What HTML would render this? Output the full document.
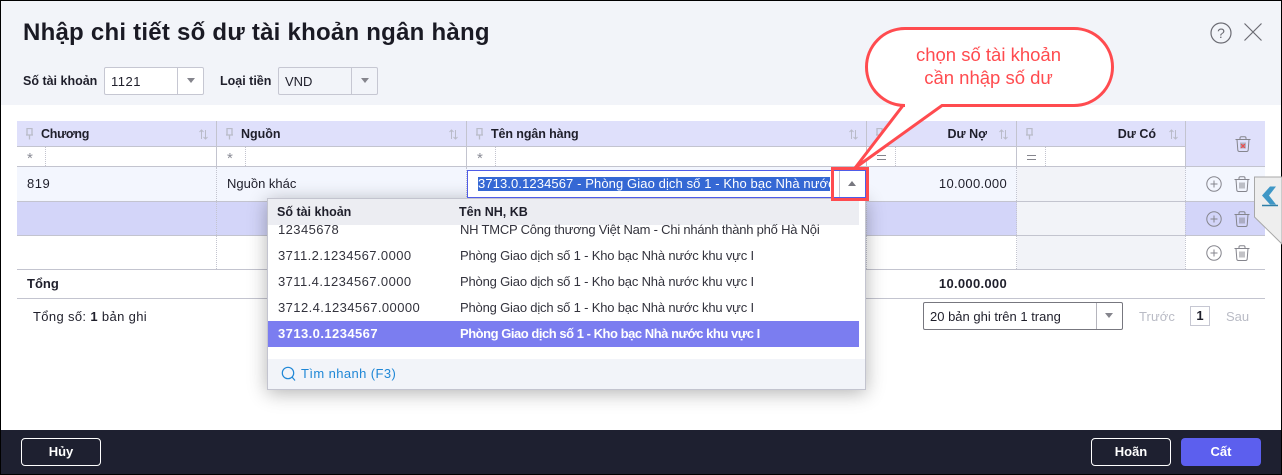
<!DOCTYPE html>
<html lang="vi"><head><meta charset="utf-8"><title>Nhập chi tiết số dư</title>
<style>
html,body{margin:0;padding:0;background:#000}
body{width:1282px;height:475px;overflow:hidden;position:relative;font-family:"Liberation Sans","DejaVu Sans",sans-serif;font-size:13px;color:#1f1f2b}
div,span,svg{position:absolute;box-sizing:border-box}
.t{white-space:nowrap;line-height:16px}
.b{font-weight:bold}
.r{text-align:right}
.hl{background:#c3c4cf}
.vd{width:0;border-left:1px dotted #c3c4cf}
.ic{fill:none}
.grey{color:#8a8c96;font-size:15px}
.n{color:#33333d;letter-spacing:.42px}
.p{color:#33333d;letter-spacing:-.18px}
</style></head><body>
<svg width="0" height="0" style="left:0;top:0">
<defs>
<symbol id="pin" viewBox="0 0 9 12"><path d="M2 .5h5v6.500H2zM1 7h7M4.500 7v4.500" fill="none" stroke="#b9bbc8" stroke-width="1.300"/></symbol>
<symbol id="sort" viewBox="0 0 9 11"><path d="M2.500 10V1M.5 3l2-2 2 2M6.500 1v9M4.500 8l2 2 2-2" fill="none" stroke="#b9bbc8" stroke-width="1"/></symbol>
<symbol id="plus" viewBox="0 0 16 16"><circle cx="8" cy="8" r="7.200" fill="none" stroke="#85858d" stroke-width="1"/><path d="M8 4.500v7M4.500 8h7" stroke="#85858d" stroke-width="1"/></symbol>
<symbol id="trash" viewBox="0 0 16 16"><path d="M.5 3.500h15M5 3.500V2q0-1.300 1.300-1.300h3.400Q11 .7 11 2v1.500M2 3.500l.8 10.500q.1 1.500 1.600 1.500h7.200q1.500 0 1.600-1.500L14 3.500M6 6.500v6M8 6.500v6M10 6.500v6" fill="none" stroke="#85858d" stroke-width="1"/></symbol>
</defs></svg>

<div style="left:1px;top:1px;width:1280px;height:473px;background:#fff"></div>
<div style="left:1px;top:1px;width:1280px;height:104px;background:#f2f4f9"></div>
<div class="t b" style="left:23px;top:19px;font-size:24px;line-height:28px;color:#1a1a24;letter-spacing:.24px">Nhập chi tiết số dư tài khoản ngân hàng</div>

<svg style="left:1210px;top:22px" width="56" height="22" class="ic"><circle cx="11" cy="11" r="10" stroke="#6c6c74" stroke-width="1.200" fill="none"/><text x="11" y="16" text-anchor="middle" font-size="14" fill="#6c6c74" font-family="Liberation Sans">?</text><path d="M34.500 1.500l17 17M51.500 1.500l-17 17" stroke="#6c6c74" stroke-width="1.200"/></svg>

<div class="t b" style="left:23px;top:73px;font-size:12.500px">Số tài khoản</div>
<div style="left:104px;top:67px;width:100px;height:28px;background:#fff;border:1px solid #c6c7d2;border-radius:2px"></div>
<div class="t" style="left:111px;top:74px;letter-spacing:.5px">1121</div>
<div style="left:177px;top:68px;width:1px;height:26px;background:#c6c7d2"></div>
<svg style="left:186px;top:78px" width="10" height="6"><path d="M1 0h8l-4 5z" fill="#85858d"/></svg>
<div class="t b" style="left:220px;top:73px;font-size:12.500px">Loại tiền</div>
<div style="left:278px;top:67px;width:100px;height:28px;background:#f2f4f9;border:1px solid #c6c7d2;border-radius:2px"></div>
<div class="t" style="left:285px;top:74px">VND</div>
<div style="left:351px;top:68px;width:1px;height:26px;background:#c6c7d2"></div>
<svg style="left:360px;top:78px" width="10" height="6"><path d="M1 0h8l-4 5z" fill="#85858d"/></svg>

<!-- table backgrounds -->
<div style="left:17px;top:121px;width:1248px;height:25px;background:#dfe0fb"></div>
<div style="left:1185px;top:121px;width:80px;height:46px;background:#dfe0fb"></div>
<div style="left:17px;top:167px;width:1248px;height:34px;background:#f3f6fe"></div>
<div style="left:17px;top:202px;width:1248px;height:33px;background:#d3d5f9"></div>
<div style="left:1017px;top:167px;width:168px;height:102px;background:#f2f3f8"></div>
<!-- horizontal lines -->
<div class="hl" style="left:17px;top:146px;width:1168px;height:1px"></div>
<div class="hl" style="left:17px;top:166px;width:1248px;height:1px"></div>
<div class="hl" style="left:17px;top:201px;width:1248px;height:1px"></div>
<div class="hl" style="left:17px;top:235px;width:1248px;height:1px"></div>
<div class="hl" style="left:17px;top:269px;width:1248px;height:1px"></div>
<div class="hl" style="left:17px;top:298px;width:1248px;height:1px"></div>
<!-- vertical lines -->
<div class="hl" style="left:216px;top:121px;width:1px;height:45px"></div>
<div class="hl" style="left:466px;top:121px;width:1px;height:45px"></div>
<div class="hl" style="left:866px;top:121px;width:1px;height:45px"></div>
<div class="hl" style="left:1016px;top:121px;width:1px;height:45px"></div>
<div class="hl" style="left:1185px;top:121px;width:1px;height:46px"></div>
<div class="vd" style="left:216px;top:167px;height:102px"></div>
<div class="vd" style="left:466px;top:167px;height:102px"></div>
<div class="vd" style="left:866px;top:167px;height:102px"></div>
<div class="vd" style="left:1016px;top:167px;height:102px"></div>
<div class="vd" style="left:1185px;top:167px;height:102px"></div>
<div class="vd" style="left:45px;top:147px;height:19px"></div>
<div class="vd" style="left:245px;top:147px;height:19px"></div>
<div class="vd" style="left:495px;top:147px;height:19px"></div>
<div class="vd" style="left:895px;top:147px;height:19px"></div>
<div class="vd" style="left:1045px;top:147px;height:19px"></div>

<!-- header cells -->
<svg style="left:25px;top:128px" width="9" height="12"><use href="#pin"/></svg>
<svg style="left:225px;top:128px" width="9" height="12"><use href="#pin"/></svg>
<svg style="left:475px;top:128px" width="9" height="12"><use href="#pin"/></svg>
<svg style="left:875px;top:128px" width="9" height="12"><use href="#pin"/></svg>
<svg style="left:1025px;top:128px" width="9" height="12"><use href="#pin"/></svg>
<svg style="left:199px;top:129px" width="9" height="11"><use href="#sort"/></svg>
<svg style="left:449px;top:129px" width="9" height="11"><use href="#sort"/></svg>
<svg style="left:849px;top:129px" width="9" height="11"><use href="#sort"/></svg>
<svg style="left:999px;top:129px" width="9" height="11"><use href="#sort"/></svg>
<svg style="left:1169px;top:129px" width="9" height="11"><use href="#sort"/></svg>
<div class="t b" style="left:41px;top:126px;font-size:12.500px;letter-spacing:-.3px">Chương</div>
<div class="t b" style="left:241px;top:126px;font-size:12.500px">Nguồn</div>
<div class="t b" style="left:491px;top:126px;font-size:12.500px;letter-spacing:-.1px">Tên ngân hàng</div>
<div class="t b r" style="left:927px;width:60px;top:126px;font-size:12.500px">Dư Nợ</div>
<div class="t b r" style="left:1096px;width:60px;top:126px;font-size:12.500px">Dư Có</div>
<div class="t grey" style="left:27px;top:151px">*</div>
<div class="t grey" style="left:227px;top:151px">*</div>
<div class="t grey" style="left:477px;top:151px">*</div>
<div style="left:877px;top:155px;width:9px;height:5px;border-top:1px solid #85858d;border-bottom:1px solid #85858d"></div>
<div style="left:1027px;top:155px;width:9px;height:5px;border-top:1px solid #85858d;border-bottom:1px solid #85858d"></div>

<svg style="left:1235px;top:136px" width="16" height="17"><use href="#trash" width="16" height="16"/><path d="M6 8l4 4M10 8l-4 4" stroke="#f04a4a" stroke-width="1.200"/></svg>

<!-- row data -->
<div class="t" style="left:27px;top:176px;letter-spacing:.5px">819</div>
<div class="t" style="left:227px;top:176px">Nguồn khác</div>
<div class="t r" style="left:907px;width:100px;top:176px;letter-spacing:.3px">10.000.000</div>

<svg style="left:1206px;top:176px" width="16" height="16"><use href="#plus"/></svg>
<svg style="left:1234px;top:176px" width="16" height="16"><use href="#trash"/></svg>
<svg style="left:1206px;top:211px" width="16" height="16"><use href="#plus"/></svg>
<svg style="left:1234px;top:211px" width="16" height="16"><use href="#trash"/></svg>
<svg style="left:1206px;top:245px" width="16" height="16"><use href="#plus"/></svg>
<svg style="left:1234px;top:245px" width="16" height="16"><use href="#trash"/></svg>

<!-- totals -->
<div class="t b" style="left:27px;top:276px">Tổng</div>
<div class="t b r" style="left:907px;width:100px;top:276px;letter-spacing:.3px">10.000.000</div>

<!-- pager -->
<div class="t" style="left:33px;top:309px;letter-spacing:.35px">Tổng số: <b>1</b> bản ghi</div>
<div style="left:923px;top:302px;width:200px;height:28px;background:#fff;border:1px solid #77777f;border-radius:2px"></div>
<div class="t" style="left:930px;top:309px">20 bản ghi trên 1 trang</div>
<div style="left:1096px;top:303px;width:1px;height:26px;background:#b5b5bd"></div>
<svg style="left:1104px;top:313px" width="10" height="6"><path d="M1 0h8l-4 5z" fill="#85858d"/></svg>
<div class="t" style="left:1139px;top:309px;color:#b9bbc5;letter-spacing:.1px">Trước</div>
<div style="left:1190px;top:306px;width:20px;height:20px;border:1px solid #c6c7d2"></div>
<div class="t b" style="left:1190px;width:20px;text-align:center;top:308px">1</div>
<div class="t" style="left:1226px;top:309px;color:#b9bbc5">Sau</div>

<!-- dropdown -->
<div style="left:267px;top:198px;width:599px;height:192px;background:#fff;border:1px solid #c3c4cf;box-shadow:0 3px 18px rgba(0,0,0,.3)"></div>
<div style="left:268px;top:199px;width:591px;height:26px;background:#ecedf2"></div>
<div class="t b" style="left:277px;top:204px;font-size:12.500px">Số tài khoản</div>
<div class="t b" style="left:459px;top:204px;font-size:12.500px">Tên NH, KB</div>
<div class="t n" style="left:278px;top:222px">12345678</div>
<div class="t p" style="left:460px;top:222px;letter-spacing:-.22px">NH TMCP Công thương Việt Nam - Chi nhánh thành phố Hà Nội</div>
<div class="t n" style="left:278px;top:248px">3711.2.1234567.0000</div>
<div class="t p" style="left:460px;top:248px">Phòng Giao dịch số 1 - Kho bạc Nhà nước khu vực I</div>
<div class="t n" style="left:278px;top:274px">3711.4.1234567.0000</div>
<div class="t p" style="left:460px;top:274px">Phòng Giao dịch số 1 - Kho bạc Nhà nước khu vực I</div>
<div class="t n" style="left:278px;top:300px">3712.4.1234567.00000</div>
<div class="t p" style="left:460px;top:300px">Phòng Giao dịch số 1 - Kho bạc Nhà nước khu vực I</div>
<div style="left:268px;top:321px;width:591px;height:26px;background:#7b7df0"></div>
<div class="t b" style="left:278px;top:326px;color:#fff;letter-spacing:.43px">3713.0.1234567</div>
<div class="t b" style="left:460px;top:326px;color:#fff;letter-spacing:-.47px">Phòng Giao dịch số 1 - Kho bạc Nhà nước khu vực I</div>
<div style="left:268px;top:359px;width:597px;height:30px;background:#f2f4f9"></div>
<svg style="left:281px;top:366px" width="15" height="16"><circle cx="7" cy="7" r="5.700" fill="none" stroke="#1f87d6" stroke-width="1.200"/><path d="M11 11l3 3.500" stroke="#1f87d6" stroke-width="1.200"/></svg>
<div class="t" style="left:301px;top:366px;color:#1f87d6;letter-spacing:.4px">Tìm nhanh (F3)</div>

<!-- active input -->
<div style="left:467px;top:170px;width:399px;height:28px;background:#fff;border:1px solid #4f5ce8"></div>
<div style="left:478px;top:177px;width:352px;height:14px;background:#3568d4"></div>
<div style="left:478px;top:176px;width:352px;height:16px;overflow:hidden"><span class="t" style="left:0;top:0;color:#fff;letter-spacing:.1px">3713.0.1234567 - Phòng Giao dịch số 1 - Kho bạc Nhà nước khu vực I</span></div>
<div style="left:839px;top:171px;width:1px;height:26px;background:#c6c7d2"></div>
<svg style="left:847px;top:181px" width="10" height="6"><path d="M1 5h8L5 0z" fill="#77777f"/></svg>

<!-- side tab -->
<svg style="left:1254px;top:176px" width="28" height="70"><path d="M.5 1H28v67L.5 41z" fill="#eeeeee" stroke="#a8a8a8"/><path d="M22 10.500h-6l-8 9 8 9h6l-7-9z" fill="#3f97c6"/><path d="M8 29.500h16" stroke="#2f7fa8" stroke-width="1.500"/></svg>

<!-- callout and red box -->
<div style="left:831px;top:167px;width:38px;height:34px;border:3px solid #ff4b4f"></div>
<svg style="left:840px;top:20px" width="285" height="160"><path d="M65 8.500H234a38.500 38.500 0 0 1 0 77H102L15 148 63 85.500H65a38.500 38.500 0 0 1 0-77z" fill="#fff" stroke="#ff4b4f" stroke-width="3" stroke-linejoin="miter"/></svg>
<div class="t" style="left:866px;width:245px;text-align:center;top:43px;font-size:18.500px;line-height:23px;color:#ff4b4f;white-space:normal">chọn số tài khoản<br>cần nhập số dư</div>

<!-- footer -->
<div style="left:1px;top:430px;width:1280px;height:44px;background:#1e2030"></div>
<div style="left:21px;top:438px;width:80px;height:28px;border:1px solid #fff;border-radius:4px"></div>
<div class="t b" style="left:21px;width:80px;text-align:center;top:444px;color:#fff">Hủy</div>
<div style="left:1091px;top:438px;width:80px;height:28px;border:1px solid #fff;border-radius:4px"></div>
<div class="t b" style="left:1091px;width:80px;text-align:center;top:444px;color:#fff">Hoãn</div>
<div style="left:1181px;top:438px;width:80px;height:28px;background:#5c5fee;border-radius:4px"></div>
<div class="t b" style="left:1181px;width:80px;text-align:center;top:444px;color:#fff">Cất</div>
</body></html>
